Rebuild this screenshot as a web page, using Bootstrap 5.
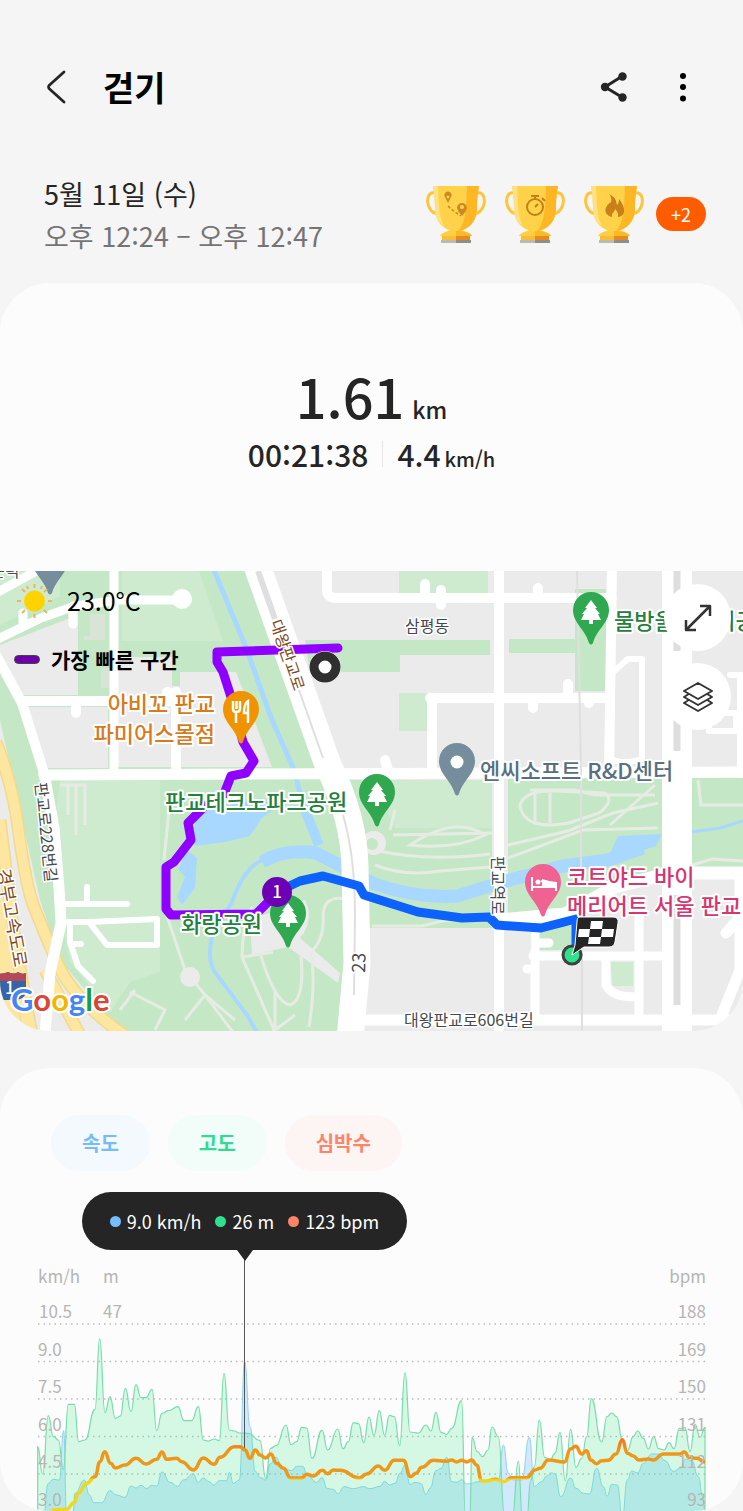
<!DOCTYPE html>
<html lang="ko">
<head>
<meta charset="utf-8">
<meta name="viewport" content="width=device-width, initial-scale=1">
<title>걷기</title>
<link rel="stylesheet" href="https://cdn.jsdelivr.net/npm/bootstrap@5.3.0/dist/css/bootstrap.min.css">
<style>
  body { background: #f5f5f5; color: #252525; font-family: "Noto Sans CJK KR", "Noto Sans", sans-serif; }
  .top-bar { padding: 63px 40px 0 36px; height: 120px; }
  .icon-btn { width: 40px; height: 48px; padding: 0; border: 0; background: none; display: flex; align-items: center; justify-content: center; color: #252525; }
  .page-title { font-size: 34px; line-height: 48px; font-weight: 700; color: #000; margin: 0 0 0 27px; }
  .tool-gap { gap: 29px; }
  .workout-date { padding: 53px 37px 26px 44px; }
  .workout-date p { font-size: 27px; line-height: 42px; margin: 0; }
  .workout-date .hours { color: #747474; }
  .trophies { gap: 19px; margin-bottom: 3px; }
  .trophy { width: 60px; height: 60px; }
  .more-count { width: 50px; height: 34px; margin-left: -7px; border-radius: 17px; background: #ff5c00; color: #fff; font-size: 18px; line-height: 34px; text-align: center; padding: 0; border: 0; }
  .panel { background: #fcfcfc; border-radius: 50px; overflow: hidden; }
  .panel + .panel { margin-top: 37px; }
  .summary { padding: 79px 0 95px; text-align: center; }
  .distance { font-size: 54px; line-height: 68px; font-weight: 500; margin: 0 0 2px; }
  .distance small { font-size: 23px; line-height: 1; font-weight: 500; margin-left: 8px; }
  .pace { font-size: 30px; line-height: 44px; font-weight: 500; margin: 0; }
  .pace small { font-size: 20px; line-height: 1; font-weight: 500; margin-left: 4px; }
  .pace .rule { width: 1px; height: 26px; background: #e4e4e4; margin: 0 14px; }
  .map-svg, .chart-svg { display: block; width: 100%; height: auto; }
  .weather { position: absolute; left: 14px; top: 10px; color: #000; }
  .weather .temp { font-size: 25px; line-height: 38px; margin-left: 12px; }
  .weather .legend-row { font-size: 21px; line-height: 32px; font-weight: 700; margin-top: 24px; }
  .legend-mark { width: 26px; height: 9px; border-radius: 5px; background: #6c00a8; border: 1px solid #444; margin-right: 11px; }
  .map-tools { position: absolute; right: 12px; top: 13px; }
  .round-btn { width: 67px; height: 67px; border-radius: 50%; border: 0; padding: 0; background: #fff; display: flex; align-items: center; justify-content: center; }
  .chips { padding: 47px 51px 0; gap: 18px; }
  .chip { height: 56px; border: 0; border-radius: 28px; padding: 0 31px; font-size: 20px; font-weight: 700; }
  .chip-speed { background: #f4f9fd; color: #76bcfb; }
  .chip-alt { background: #f2fdf9; color: #2fdc92; }
  .chip-heart { background: #fcf5f4; color: #fd8468; }
  .readout { position: relative; width: 325px; height: 58px; margin: 21px 0 0 82px; border-radius: 29px; background: #252525; color: #fff; font-size: 18px; gap: 14px; }
  .readout::after { content: ""; position: absolute; left: 50%; top: 100%; margin-left: -8px; border: 8px solid transparent; border-top: 11px solid #252525; border-bottom: 0; }
  .dot { width: 11px; height: 11px; border-radius: 50%; margin-right: 6px; }
  .dot-speed { background: #76bdfd; }
  .dot-alt { background: #2fe08f; }
  .dot-heart { background: #fd8468; }
  .map-svg text { paint-order: stroke; stroke: #fff; stroke-width: 4px; stroke-linejoin: round; font-size: 22px; font-weight: 500; }
  .map-svg .street { font-size: 16px; font-weight: 400; stroke-width: 3px; }
  .map-svg .big-street { font-size: 18px; font-weight: 400; stroke-width: 3px; }
  .map-svg .plain { stroke: none; font-size: 17px; }
  .map-svg .credit { font-family: Lato, sans-serif; font-size: 31px; font-weight: 700; }
  .chart-svg text { font-size: 17px; fill: #b5b5b5; }
</style>
</head>
<body>
<svg width="0" height="0" class="position-absolute" aria-hidden="true">
  <defs>
    <symbol id="cup" viewBox="0 0 60 60">
      <path d="M9 9C-2 6-1 31 14 30M51 9c11-3 10 22-5 21" fill="none" stroke="#fdc53c" stroke-width="3"/>
      <path d="M26 43h8c0 5 10 4 12 9H14c2-5 12-4 12-9z" fill="#ffce43"/>
      <path d="M30 45c3 3 14 2 16 7H30z" fill="#fdb827"/>
      <path d="M7 2h46c-1 7-2 13-2 22 0 16-11 23-21 23S9 40 9 24C9 15 8 9 7 2z" fill="#ffd24a"/>
      <path d="M41 2h12c-1 7-2 13-2 22 0 15-10 22-19 23 9-9 8-28 9-45z" fill="#fdb624"/>
      <path d="M7 2h5c1 13 0 29 6 40C11 38 9 31 9 24 9 15 8 9 7 2z" fill="#ffe185"/>
      <path d="M16 52h28v4H16z" fill="#f7bd34"/><path d="M30 52h14v4H30z" fill="#e58a1c"/>
      <path d="M15 56h15v3H15z" fill="#b9b9b5"/><path d="M30 56h15v3H30z" fill="#8e8e8a"/>
    </symbol>
    <symbol id="pin" viewBox="0 0 36 53">
      <path d="M18 0a18 18 0 0 1 18 18c0 13-12 19-16 33q-2 3-4 0C12 37 0 31 0 18A18 18 0 0 1 18 0z"/>
    </symbol>
    <symbol id="tree" viewBox="0 0 20 24">
      <path fill="#fff" d="M10 0l6 8h-2l5 6h-2l3 6h-8v4H8v-4H0l3-6H1l5-6H4z"/>
    </symbol>
  </defs>
</svg>

<header class="top-bar d-flex align-items-start">
  <button class="icon-btn" aria-label="뒤로"><svg width="22" height="34" viewBox="0 0 22 34" fill="none" stroke="#252525" stroke-width="2.800" stroke-linecap="round" stroke-linejoin="round"><path d="M19 2L4 15.500Q3 17 4 18.500L19 32"/></svg></button>
  <h1 class="page-title">걷기</h1>
  <div class="tool-gap d-flex ms-auto">
    <button class="icon-btn" aria-label="공유"><svg width="28" height="30" viewBox="0 0 28 30"><path d="M22.500 4L5 15l17.500 10.500" fill="none" stroke="#252525" stroke-width="3"/><g fill="#252525"><circle cx="22.500" cy="4.500" r="4.200"/><circle cx="5" cy="15" r="4.200"/><circle cx="22.500" cy="25.500" r="4.200"/></g></svg></button>
    <button class="icon-btn" aria-label="더보기"><svg width="8" height="30" viewBox="0 0 8 30"><circle cx="4" cy="4" r="3"/><circle cx="4" cy="15" r="3"/><circle cx="4" cy="26.500" r="3"/></svg></button>
  </div>
</header>

<section class="workout-date d-flex align-items-center justify-content-between">
  <div>
    <p>5월 11일 (수)</p>
    <p class="hours">오후 12:24 – 오후 12:47</p>
  </div>
  <div class="trophies d-flex align-items-center">
    <svg class="trophy" viewBox="0 0 60 60"><use href="#cup"/><path d="M19 13a3.500 3.500 0 1 1 6 0l-3 6zM31 24a5 5 0 1 1 10 0q-1 4-5 8-4-4-5-8z" fill="#c98a22"/><circle cx="22" cy="13" r="1.400" fill="#ffd24a"/><circle cx="36" cy="23" r="2" fill="#ffd24a"/><path d="M22 22l3 3 4 3 6 4" fill="none" stroke="#c98a22" stroke-width="1.500" stroke-dasharray="3 2"/></svg>
    <svg class="trophy" viewBox="0 0 60 60"><use href="#cup"/><g fill="none" stroke="#c08217" stroke-width="2"><circle cx="30" cy="23" r="8"/><path d="M26 12h8M30 12v3M30 23l3-3M37 14l3 3"/></g></svg>
    <svg class="trophy" viewBox="0 0 60 60"><use href="#cup"/><path d="M25 10c8 4 7 8 8 11 2-2 2-4 2-6 6 7 8 17-1 18 1-4-2-7-3-8 0 3-4 4-3 8-10-3-7-11-1-15 1-3 0-6-2-8z" fill="#c98018"/></svg>
    <button class="more-count">+2</button>
  </div>
</section>

<main>
<section class="panel">
  <div class="summary">
    <p class="distance">1.61<small>km</small></p>
    <p class="pace d-flex align-items-center justify-content-center"><span>00:21:38</span><span class="rule"></span><span>4.4<small>km/h</small></span></p>
  </div>

  <div class="position-relative">
    <svg class="map-svg" viewBox="0 571 743 460">
      <rect x="0" y="571" width="743" height="460" fill="#ebebeb"/>
      <!-- parks -->
      <g fill="#c4e8c5">
        <path d="M0 571h245l85 200 25 95 2 165H120L60 960 40 900 0 720z"/>
        <path d="M340 780h152v148H366zM508 778h154v100l-60 20-25 15-45 12-24-8zM692 778h51v90h-51zM530 926h50v24h-50z"/>
        <path d="M305 640h185v15h-90v17h-90zM509 639h66v-50h31v102h-31v-38h-66z"/>
      </g>
      <g fill="#ceebd0">
        <path d="M122 571h77l24 70H122zM60 780h100v192l-30 10-20 30-40-50-20-100zM372 780h120v48H395zM399 571h89v22h-89zM399 693h28v38h-28zM610 962h23v24h-20zM0 571h60v25L0 625z"/>
      </g>
      <!-- blocks -->
      <g fill="#ebebeb">
        <path d="M0 645l78-30v80H20L0 665zM27 707h81v61H45zM118 657h54v29h8v-14h56l36 95H118z"/>
        <path d="M0 770l14 55 17 85 27 65 62 60H0zM250 920l55-20q10 20-5 38l40 35-2 10-50-36-36 8z"/>
      </g>
      <path d="M101 668h8v20h-8zM90 614h15v26H84v-4h6z" fill="#d8e4d6"/>
      <!-- water -->
      <g fill="#a8d8ff">
        <path d="M196 820l12-10 52-12 18 8-16 12-12 18-25 6-30 4q-4-14 1-26zM187 850l10 8-2 30-13 17-5-8 8-20-7-8zM618 836l44-2-6 12-30 10-20 6z"/>
      </g>
      <g fill="none" stroke="#a8d8ff">
        <path d="M213 568l32 77 27 75 22 50 9 35" stroke-width="5"/>
        <path d="M303 805l16 40" stroke-width="10"/>
        <path d="M262 862q23-14 54-9l29 15 27 15q45 16 85 13l53-16 53-14 45-6 35-12" stroke-width="13"/>
        <path d="M262 860q-18 8-30 42l-20 35q-6 25 5 38l30 40 14 25" stroke-width="4"/>
        <path d="M690 832l30-4 23-7" stroke-width="3"/>
      </g>
      <!-- footpaths -->
      <g fill="none" stroke="#e6ece4" stroke-width="3">
        <path d="M170 800l-6 60M165 910l20 60 20 25 30 40M205 995l-20 25M205 995l30 25M242 957q0-30 10-50M242 957l35 80M260 953q15 50 30 52 15-5 11-50M243 957l30-5M275 990v40M295 1015l-20 15M345 899q-20-4-22 15 2 25-12 38 5 30-2 75"/>
        <path d="M375 865q30 12 65 6l50-4M375 850q50 12 115 4M393 835l100-2M410 845q45-30 75-10-30 15-75 10zM372 926h50l20-5 50-4M395 810l-5 20"/>
        <path d="M508 845l60-14 45-18 45-10M508 858l75-28 75-2M530 790h45l20 5h60M520 806q3-16 35-15l50 2q10 8-6 20l-30 10q-45 8-49-17zM535 793v30M550 793v30M698 780l3 25h42M692 865l20-6 31 2M655 785l-45 40"/>
        <path d="M60 785h8v30M67 785h18v40M76 785v50M130 992l35 18-10 20M120 1010l15-20"/>
      </g>
      <circle cx="374" cy="843" r="12" fill="#ebebeb"/><circle cx="372" cy="844" r="6" fill="#c4e8c5"/>
      <circle cx="190" cy="977" r="10" fill="#ebebeb"/>
      <!-- expressway -->
      <g fill="none" stroke="#f2d98b" stroke-width="13"><path d="M-4 742q16 40 22 85 8 60 16 80 12 30 25 60 20 40 80 78M0 820l12 100q8 50 20 115M45 970l35 65"/></g>
      <g fill="none" stroke="#fde7a0" stroke-width="10"><path d="M-4 742q16 40 22 85 8 60 16 80 12 30 25 60 20 40 80 78M0 820l12 100q8 50 20 115M45 970l35 65"/><path d="M0 900l18 130" stroke-width="20"/></g>
      <path d="M4 900l18 130" fill="none" stroke="#f2d98b" stroke-width="1"/>
      <!-- streets -->
      <g fill="none" stroke="#fff" stroke-linecap="round" stroke-linejoin="round" stroke-width="10">
        <path d="M-4 593l55-30M-4 640l45-22 34-12 45-6h55M114 565v205M73 606v18M23 613v10" stroke-width="9"/>
        <circle cx="182" cy="599" r="5"/>
        <path d="M-4 655l26 48 22 70M22 701h150M76 703v10M167 692h1M176 692v78"/>
        <path d="M44 775l699-3" stroke-width="11"/>
        <path d="M44 773l10 55 5 60 2 35-11 50-5 62" stroke-width="11"/>
        <path d="M63 904h64M87 887v17M64 922h25l68-3v26h-50l-18-23M70 922v20l8 24 15 15M73 944h8" stroke-width="6"/>
        <path d="M255 560l73 205q26 52 27 102l2 96-7 76" stroke-width="27"/>
        <path d="M327 565v25q0 8 10 8h275M425 584v12M441 590v15M538 588v10M612 565l-3 208M499 565v470M430 698h178M432 700v72M568 684v12M533 700v8M589 700v3M385 760l3 10"/>
        <path d="M612 673l16-14h14v100q-20 6-30 0" stroke-width="6"/>
        <path d="M499 920l66-6 50-27 55-14h73" stroke-width="13"/>
        <path d="M535 930v90M533 956h132M639 915v102M606 960v25q5 12 30 12M527 969h8M541 943h8" stroke-width="9"/>
        <path d="M360 1020h383M740 880v90l-20 50M726 933l14-16" stroke-width="11"/>
        <path d="M709 731h27v-18h-27zM740 675v100M730 675h13" stroke-width="6"/>
      </g>
      <path d="M677 565v475" stroke="#fff" stroke-width="30"/>
      <path d="M677 571v80M677 681v70M677 895v110" stroke="#dedede" stroke-width="7"/>
      <g fill="none" stroke="#dfdfdf" stroke-width="2"><path d="M577 571l4 200v110M582 920v110M299 690l24 68M343 815q12 40 12 100l-1 80"/><path d="M258 571l17 48" stroke-width="6"/></g>

      <!-- route -->
      <g fill="none" stroke-linejoin="round" stroke-linecap="round" stroke-width="9">
        <path stroke="#9000ff" d="M338 648l-121 4v10l6 10 9 28 11 42 11 19-8 12-15 3-7 18-20 13-16 16 3 17-17 22-8 5v42l5 6 85-1 22-22"/>
        <path stroke="#0c62fa" d="M277 892l23-11 23-5 36 10 5 9 54 17 44 6 27-1 8 8 44 3 35-9v24"/>
      </g>

      <!-- places -->
      <g>
        <use href="#pin" x="223" y="691" width="36" height="53" fill="#f09300"/>
        <path d="M233 701v8q0 3 3 3v11M240 701v8q0 3-4 3M236.500 701v8M248 723v-22q-4 2-4 12h3" fill="none" stroke="#fff" stroke-width="2.500"/>
        <use href="#pin" x="573" y="592" width="36" height="53" fill="#2fa84f"/><use href="#tree" x="581" y="600" width="20" height="24"/>
        <use href="#pin" x="359" y="774" width="36" height="53" fill="#2fa84f"/><use href="#tree" x="367" y="782" width="20" height="24"/>
        <use href="#pin" x="270" y="895" width="36" height="53" fill="#2fa84f"/><use href="#tree" x="278" y="903" width="20" height="24"/>
        <use href="#pin" x="439" y="743" width="36" height="53" fill="#758d9d"/><circle cx="457" cy="762" r="6.500" fill="#fff"/>
        <use href="#pin" x="32" y="542" width="36" height="53" fill="#758d9d"/>
        <use href="#pin" x="525" y="864" width="36" height="53" fill="#ef6292"/>
        <path d="M532 877v14M556 891v-8l-15-2" fill="none" stroke="#fff" stroke-width="2"/><circle cx="538" cy="882" r="2.500" fill="#fff"/><path d="M542 879l14 4v5h-24v-2h10z" fill="#fff"/>
      </g>
      <g fill="#45494d">
        <text class="street" x="-10" y="577">근덕</text>
        <text class="street" x="405" y="632">삼평동</text>
        <text class="street" x="404" y="1026">대왕판교로606번길</text>
        <text class="street" transform="translate(35 783) rotate(84)">판교로228번길</text>
        <text class="street" transform="translate(492 856) rotate(90)">판교역로</text>
        <text class="big-street" transform="translate(365 973) rotate(-88)">23</text>
      </g>
      <g fill="#7a4a20">
        <text class="street" transform="translate(270 622) rotate(71)">대왕판교로</text>
        <text class="big-street" transform="translate(-3 870) rotate(80)">경부고속도로</text>
      </g>
      <g fill="#d57b1e"><text x="215" y="712" text-anchor="end">아비꼬 판교</text><text x="215" y="742" text-anchor="end">파미어스몰점</text></g>
      <g fill="#23803d"><text x="165" y="810">판교테크노파크공원</text><text x="181" y="932">화랑공원</text><text x="614" y="629">물방울어린이공원</text></g>
      <text x="480" y="779" fill="#56707f">엔씨소프트 R&amp;D센터</text>
      <g fill="#d6366f"><text x="567" y="885">코트야드 바이</text><text x="567" y="914">메리어트 서울 판교</text></g>

      <!-- route markers -->
      <circle cx="325" cy="667" r="16" fill="#fff"/>
      <circle cx="325" cy="667" r="11" fill="#fff" stroke="#2f2f2f" stroke-width="9"/>
      <circle cx="277" cy="892" r="15" fill="#6c00b4"/>
      <text class="plain" x="277" y="898" text-anchor="middle" fill="#fff">1</text>
      <circle cx="572" cy="955" r="9" fill="#2fe08c" stroke="#3c4440" stroke-width="3"/>
      <path d="M580 917h33q6 0 5 6l-3 19q-1 5-6 5h-25l-12 8 3-10 2-23q0-5 3-5z" fill="#252525" stroke="#fff"/>
      <path d="M591 921h12l-1 8h-12zM579 929h11l-1 8h-11zM602 929h12l-1 8h-12zM589 937h12l-1 7h-12z" fill="#fff"/>
      <!-- road shield and map credit -->
      <path d="M-4 974q8 0 12-2 6 3 10 0 4 3 8 1v20q-2 6-10 7H-4z" fill="#3763a8"/><path d="M-4 974q8 0 12-2 6 3 10 0 4 3 8 1v8H-4z" fill="#b34858"/>
      <text class="plain" x="5" y="994" fill="#fff">1</text>
      <text class="credit" x="11" y="1011"><tspan fill="#4285f4">G</tspan><tspan fill="#db4437">o</tspan><tspan fill="#f4b400">o</tspan><tspan fill="#4285f4">g</tspan><tspan fill="#0f9d58">l</tspan><tspan fill="#db4437">e</tspan></text>
    </svg>

    <div class="weather">
      <div class="d-flex align-items-center">
        <svg width="41" height="38" viewBox="0 0 41 38"><circle cx="20.500" cy="20" r="10.500" fill="#ffd200"/><path d="M20.500 3v4M20.500 33v4M3 20h4M34 20h4M8 8l3 3M33 8l-3 3M8 32l3-3M33 32l-3-3M13 5l1 3M28 5l-1 3" stroke="#ebb65f" stroke-width="2"/></svg>
        <span class="temp">23.0°C</span>
      </div>
      <div class="legend-row d-flex align-items-center"><span class="legend-mark"></span>가장 빠른 구간</div>
    </div>
    <div class="map-tools d-grid gap-2">
      <button class="round-btn mb-1" aria-label="지도 확대"><svg width="28" height="28" viewBox="0 0 28 28" fill="none" stroke="#333" stroke-width="2.500" stroke-linejoin="round"><path d="M2 26L26 2M16 2h10v10M2 16v10h10"/></svg></button>
      <button class="round-btn" aria-label="지도 종류"><svg width="32" height="32" viewBox="0 0 32 32" fill="none" stroke="#333" stroke-width="2" stroke-linejoin="round"><path d="M16 2l14 8-14 8-14-8zM6 13.500L2 16l14 8 14-8-4-2.500M6 19.500L2 22l14 8 14-8-4-2.500"/></svg></button>
    </div>
  </div>
</section>

<section class="panel">
  <div class="chips d-flex">
    <button class="chip chip-speed">속도</button>
    <button class="chip chip-alt">고도</button>
    <button class="chip chip-heart">심박수</button>
  </div>
  <div class="readout d-flex align-items-center justify-content-center">
    <span class="d-flex align-items-center"><i class="dot dot-speed"></i>9.0 km/h</span>
    <span class="d-flex align-items-center"><i class="dot dot-alt"></i>26 m</span>
    <span class="d-flex align-items-center"><i class="dot dot-heart"></i>123 bpm</span>
  </div>
  <svg class="chart-svg" viewBox="0 0 743 261" id="chart">
    <defs>
      <linearGradient id="zones" gradientUnits="userSpaceOnUse" x1="0" y1="180" x2="0" y2="240">
        <stop offset="0.150" stop-color="#f5761a"/><stop offset="0.350" stop-color="#ee9719"/><stop offset="0.790" stop-color="#ee9719"/><stop offset="0.830" stop-color="#f3d51f"/>
      </linearGradient>
    </defs>
    <g stroke="#bdbdbd" stroke-width="1.500" stroke-dasharray="1.500 4">
      <path d="M38 74h668M38 111.500h668M38 149h668M38 186.500h668M38 224h668"/>
    </g>
    <path id="speed" fill="#69bdfc" fill-opacity=".3" stroke="#8fd3ee" stroke-width="1"/>
    <path id="altitude" fill="#3eed89" fill-opacity=".2" stroke="#79dcae" stroke-width="1.200"/>
    <path d="M244.500 8v193" stroke="#555" stroke-width="1"/>
    <path id="heart" fill="none" stroke="url(#zones)" stroke-width="3.500" stroke-linejoin="round"/>
    <g>
      <text x="38" y="33">km/h</text><text x="103" y="33">m</text><text x="706" y="33" text-anchor="end">bpm</text>
      <text x="39" y="68">10.5</text><text x="103" y="68">47</text><text x="706" y="68" text-anchor="end">188</text>
      <text x="38" y="106">9.0</text><text x="706" y="106" text-anchor="end">169</text>
      <text x="38" y="143">7.5</text><text x="706" y="143" text-anchor="end">150</text>
      <text x="38" y="181">6.0</text><text x="706" y="181" text-anchor="end">131</text>
      <text x="38" y="218">4.5</text><text x="706" y="218" text-anchor="end">112</text>
      <text x="38" y="256">3.0</text><text x="706" y="256" text-anchor="end">93</text>
    </g>
  </svg>
</section>
</main>

<script src="https://cdn.jsdelivr.net/npm/bootstrap@5.3.0/dist/js/bootstrap.bundle.min.js"></script>
<script>
  // Samples are stored at three units per chart unit.
  const series = {
    altitude: "113,590 128,672 145,497 160,560 175,570 190,658 205,463 223,463 236,575 255,570 285,478 299,266 315,488 330,440 346,505 361,498 376,415 393,485 408,404 423,443 438,443 456,418 470,542 486,490 505,482 534,470 552,512 575,512 595,470 610,570 625,573 642,567 658,572 672,370 688,540 703,543 718,549 745,550 780,572 797,685 812,595 828,587 858,525 873,584 890,575 905,532 920,534 936,625 966,541 983,600 1013,537 1029,596 1045,575 1060,518 1076,521 1091,578 1107,501 1122,556 1138,482 1154,556 1168,496 1183,500 1199,587 1215,368 1230,546 1255,549 1278,525 1293,543 1308,487 1323,547 1340,553 1355,535 1385,452 1396,800 1410,800 1416,562 1432,605 1448,620 1464,600 1476,531 1495,560 1514,800 1537,800 1555,633 1567,800 1581,800 1592,690 1603,650 1618,510 1634,622 1650,630 1665,610 1680,547 1696,693 1712,538 1728,652 1745,625 1760,560 1774,446 1805,576 1821,500 1835,489 1850,500 1867,570 1882,602 1900,560 1913,543 1930,565 1945,597 1961,560 1976,596 1992,600 2007,578 2022,596 2038,535 2055,533 2070,605 2085,523 2100,562 2115,532",
    speed: "130,800 145,700 160,688 178,690 191,542 200,800 218,800 225,730 253,690 268,735 282,758 305,758 330,722 350,735 375,742 393,708 408,714 423,706 440,716 455,706 470,708 486,666 510,697 533,709 550,690 580,672 594,697 610,684 627,695 642,705 658,692 680,692 688,667 700,700 718,690 734,335 750,530 766,665 782,683 797,690 812,640 828,622 845,650 875,662 890,649 908,649 922,676 950,697 966,683 982,716 1000,718 1013,731 1033,710 1060,716 1090,710 1110,716 1140,709 1154,694 1168,705 1185,700 1200,670 1215,645 1230,703 1245,697 1262,700 1278,733 1290,715 1308,662 1323,655 1340,622 1355,695 1370,697 1385,689 1400,702 1440,695 1495,690 1510,585 1525,670 1540,690 1565,690 1588,562 1603,710 1625,695 1640,678 1655,668 1665,672 1682,740 1712,684 1728,715 1750,730 1768,732 1790,655 1810,710 1822,738 1835,703 1852,705 1867,800 1882,690 1895,663 1913,668 1930,640 1955,612 1975,612 1995,632 2020,664 2040,655 2058,627 2075,632 2095,680 2108,740 2115,783",
    heart: "155,780 200,778 222,758 235,730 260,700 285,680 300,635 314,605 332,640 346,654 375,645 408,625 438,642 470,628 486,606 500,628 530,625 545,635 580,660 610,624 642,643 660,622 703,590 720,590 735,600 750,625 766,600 780,615 797,624 812,612 830,640 850,655 872,684 905,684 920,673 940,678 967,661 983,671 1000,660 1020,661 1078,684 1100,672 1135,648 1154,661 1183,631 1210,631 1232,680 1248,670 1265,652 1300,631 1340,634 1355,630 1370,636 1385,631 1400,636 1415,630 1430,645 1445,693 1460,693 1485,688 1510,695 1535,683 1580,683 1605,660 1620,655 1645,630 1693,636 1712,597 1727,589 1745,612 1760,602 1772,630 1790,641 1805,632 1825,631 1848,612 1867,569 1882,610 1900,618 1916,630 1945,627 1960,630 1990,612 2040,612 2053,606 2068,622 2090,625 2115,636"
  };
  function curve(text) {
    const pts = text.split(" ").map(p => p.split(",").map(v => v / 3));
    let d = "M" + pts[0].join(" ");
    for (let i = 1; i < pts.length; i++) {
      const [a, b] = [pts[i - 1], pts[i]], m = (a[0] + b[0]) / 2;
      d += `C${m} ${a[1]} ${m} ${b[1]} ${b[0]} ${b[1]}`;
    }
    return { d, first: pts[0][0], last: pts[pts.length - 1][0] };
  }
  for (const name in series) {
    const c = curve(series[name]);
    document.getElementById(name).setAttribute("d", name === "heart" ? c.d : `M${c.first} 270L${c.d.slice(1)}V270`);
  }
</script>
</body>
</html>
